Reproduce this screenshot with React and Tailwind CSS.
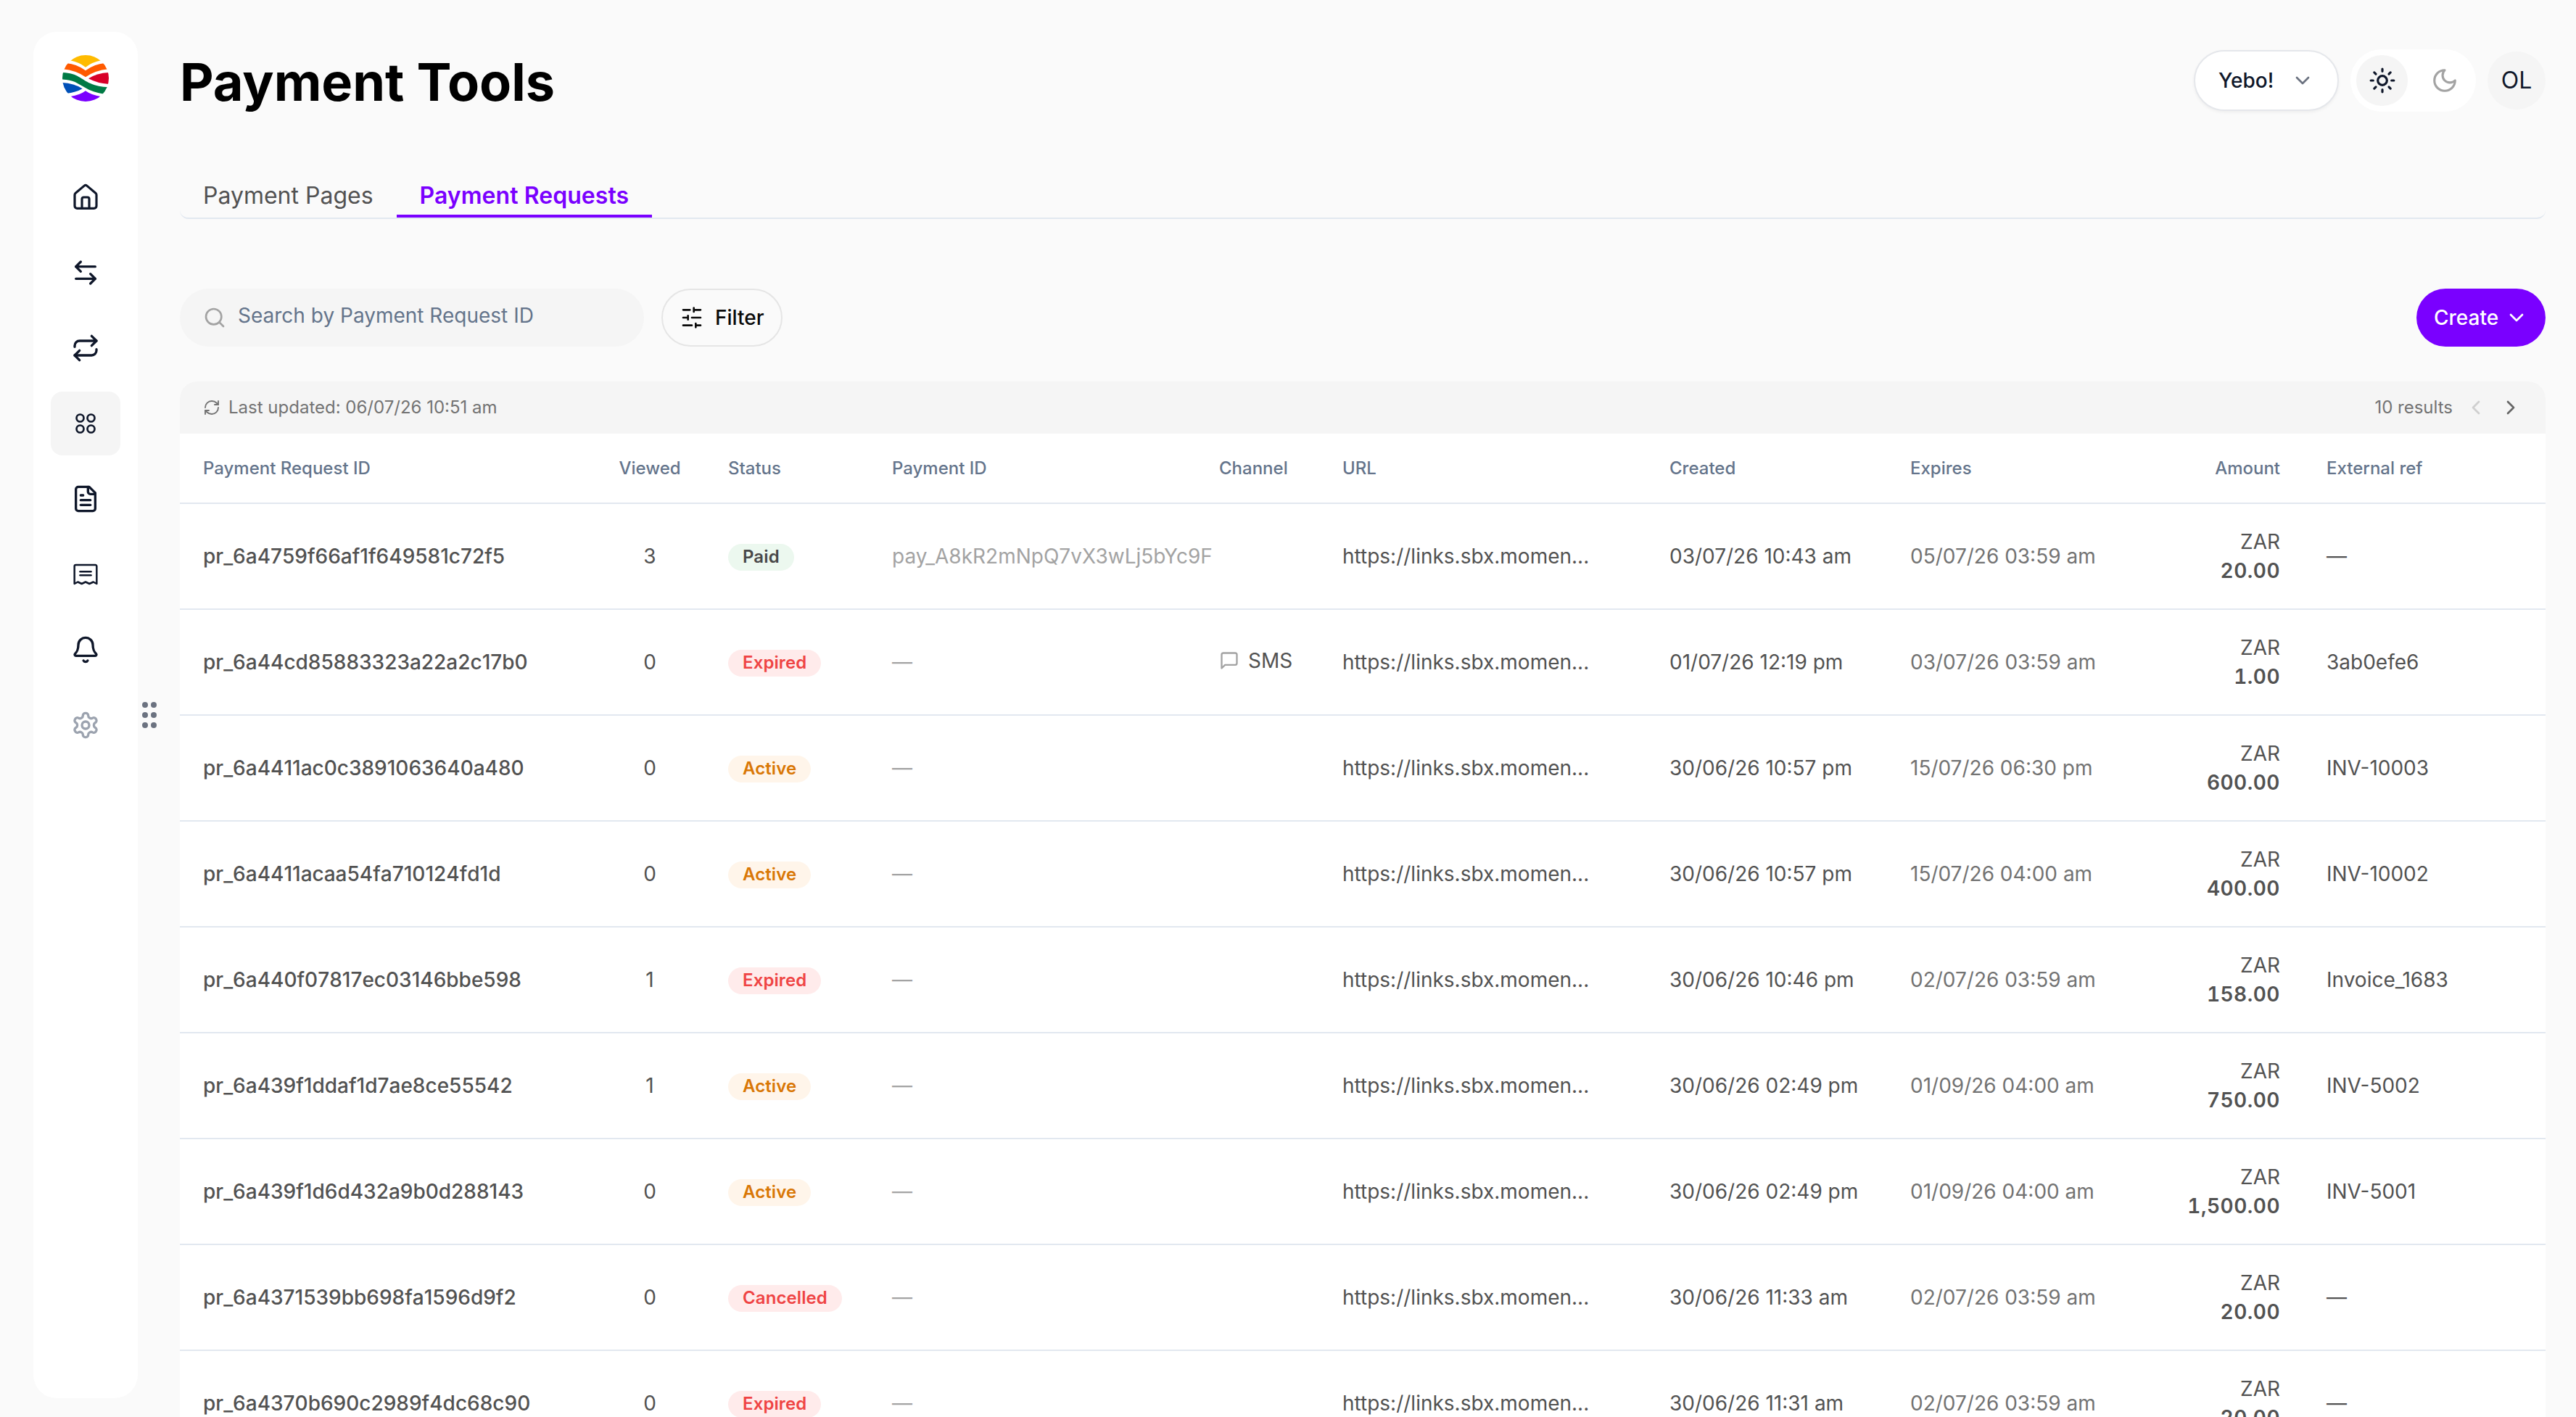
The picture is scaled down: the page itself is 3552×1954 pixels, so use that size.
import React from "react";

function Icon({ children, className = "size-8", strokeWidth = 2 }) {
  return (
    <svg
      viewBox="0 0 24 24"
      fill="none"
      stroke="currentColor"
      strokeWidth={strokeWidth}
      strokeLinecap="round"
      strokeLinejoin="round"
      className={`shrink-0 ${className}`}
    >
      {children}
    </svg>
  );
}

function Logo() {
  return (
    <svg viewBox="24 24 192 192" className="size-16 shrink-0">
      <defs>
        <clipPath id="disc">
          <circle cx="120" cy="120" r="96" />
        </clipPath>
      </defs>
      <g clipPath="url(#disc)">
        <path d="M56 46Q92 53 120 74Q148 53 184 46V20H56Z" fill="#ffbb00" />
        <path d="M40 57Q85 61 120 88Q155 61 200 57L214 82Q160 87 120 115Q80 87 26 82Z" fill="#ff5a00" />
        <path d="M20 96C90 98 100 125 140 141C165 152 185 156 220 157L198 185C165 181 140 172 115 157C85 139 70 126 20 124Z" fill="#007a45" />
        <path d="M132 121Q167 98 220 96V144Q170 142 132 121Z" fill="#d80029" />
        <path d="M20 138Q70 139 107 163Q80 179 40 183Z" fill="#0050b8" />
        <path d="M58 195Q95 190 120 172Q145 190 182 195V220H58Z" fill="#7a00ff" />
      </g>
    </svg>
  );
}

const navItems = [
  {
    name: "Home",
    icon: (
      <Icon className="size-10" strokeWidth={1.9}>
        <path d="M3 10.1a2 2 0 0 1 .72-1.54l7.2-6.1a1.7 1.7 0 0 1 2.16 0l7.2 6.1A2 2 0 0 1 21 10.1v9.1a2 2 0 0 1-2 2H5a2 2 0 0 1-2-2z" />
        <path d="M9 21v-7.6a1.4 1.4 0 0 1 1.4-1.4h3.2a1.4 1.4 0 0 1 1.4 1.4V21" />
      </Icon>
    ),
  },
  {
    name: "Transfers",
    icon: (
      <Icon className="size-10">
        <path d="M8 3 4 7l4 4" />
        <path d="M4 7h16" />
        <path d="m16 21 4-4-4-4" />
        <path d="M20 17H4" />
      </Icon>
    ),
  },
  {
    name: "Subscriptions",
    icon: (
      <Icon className="size-10">
        <path d="m17 2 4 4-4 4" />
        <path d="M3 11v-1a4 4 0 0 1 4-4h14" />
        <path d="m7 22-4-4 4-4" />
        <path d="M21 13v1a4 4 0 0 1-4 4H3" />
      </Icon>
    ),
  },
  {
    name: "Payment Tools",
    active: true,
    icon: (
      <Icon className="size-10" strokeWidth={1.6}>
        <circle cx="7.5" cy="7.5" r="3" />
        <circle cx="16.5" cy="7.5" r="3" />
        <circle cx="7.5" cy="16.5" r="3" />
        <circle cx="16.5" cy="16.5" r="3" />
      </Icon>
    ),
  },
  {
    name: "Reports",
    icon: (
      <Icon className="size-10">
        <path d="M15 2H6a2 2 0 0 0-2 2v16a2 2 0 0 0 2 2h12a2 2 0 0 0 2-2V7Z" />
        <path d="M14 2v4a2 2 0 0 0 2 2h4" />
        <path d="M10 9H8" />
        <path d="M16 13H8" />
        <path d="M16 17H8" />
      </Icon>
    ),
  },
  {
    name: "Receipts",
    icon: (
      <Icon className="size-10" strokeWidth={1.5}>
        <path d="M2.8 19.8V5.3a1.1 1.1 0 0 1 1.1-1.1h16.2a1.1 1.1 0 0 1 1.1 1.1v14.5l-2.8-1.5-3.2 1.5-3.2-1.5-3.2 1.5-3.2-1.5z" />
        <path d="M7.5 9.8h9" />
        <path d="M7.5 12.8h9" />
      </Icon>
    ),
  },
  {
    name: "Notifications",
    icon: (
      <Icon className="size-10">
        <path d="M10.268 21a2 2 0 0 0 3.464 0" />
        <path d="M3.262 15.326A1 1 0 0 0 4 17h16a1 1 0 0 0 .74-1.673C19.41 13.956 18 12.499 18 8A6 6 0 0 0 6 8c0 4.499-1.411 5.956-2.738 7.326" />
      </Icon>
    ),
  },
  {
    name: "Settings",
    muted: true,
    icon: (
      <Icon className="size-10">
        <path d="M12.22 2h-.44a2 2 0 0 0-2 2v.18a2 2 0 0 1-1 1.73l-.43.25a2 2 0 0 1-2 0l-.15-.08a2 2 0 0 0-2.73.73l-.22.38a2 2 0 0 0 .73 2.73l.15.1a2 2 0 0 1 1 1.72v.51a2 2 0 0 1-1 1.74l-.15.09a2 2 0 0 0-.73 2.73l.22.38a2 2 0 0 0 2.73.73l.15-.08a2 2 0 0 1 2 0l.43.25a2 2 0 0 1 1 1.73V20a2 2 0 0 0 2 2h.44a2 2 0 0 0 2-2v-.18a2 2 0 0 1 1-1.73l.43-.25a2 2 0 0 1 2 0l.15.08a2 2 0 0 0 2.73-.73l.22-.39a2 2 0 0 0-.73-2.73l-.15-.08a2 2 0 0 1-1-1.74v-.5a2 2 0 0 1 1-1.74l.15-.09a2 2 0 0 0 .73-2.73l-.22-.38a2 2 0 0 0-2.73-.73l-.15.08a2 2 0 0 1-2 0l-.43-.25a2 2 0 0 1-1-1.73V4a2 2 0 0 0-2-2z" />
        <circle cx="12" cy="12" r="3" />
      </Icon>
    ),
  },
];

const rows = [
  { id: "pr_6a4759f66af1f649581c72f5", viewed: 3, status: "Paid", payment: "pay_A8kR2mNpQ7vX3wLj5bYc9F", created: "03/07/26 10:43 am", expires: "05/07/26 03:59 am", amount: "20.00", ref: "—" },
  { id: "pr_6a44cd85883323a22a2c17b0", viewed: 0, status: "Expired", payment: "—", channel: "SMS", created: "01/07/26 12:19 pm", expires: "03/07/26 03:59 am", amount: "1.00", ref: "3ab0efe6" },
  { id: "pr_6a4411ac0c3891063640a480", viewed: 0, status: "Active", payment: "—", created: "30/06/26 10:57 pm", expires: "15/07/26 06:30 pm", amount: "600.00", ref: "INV-10003" },
  { id: "pr_6a4411acaa54fa710124fd1d", viewed: 0, status: "Active", payment: "—", created: "30/06/26 10:57 pm", expires: "15/07/26 04:00 am", amount: "400.00", ref: "INV-10002" },
  { id: "pr_6a440f07817ec03146bbe598", viewed: 1, status: "Expired", payment: "—", created: "30/06/26 10:46 pm", expires: "02/07/26 03:59 am", amount: "158.00", ref: "Invoice_1683" },
  { id: "pr_6a439f1ddaf1d7ae8ce55542", viewed: 1, status: "Active", payment: "—", created: "30/06/26 02:49 pm", expires: "01/09/26 04:00 am", amount: "750.00", ref: "INV-5002" },
  { id: "pr_6a439f1d6d432a9b0d288143", viewed: 0, status: "Active", payment: "—", created: "30/06/26 02:49 pm", expires: "01/09/26 04:00 am", amount: "1,500.00", ref: "INV-5001" },
  { id: "pr_6a4371539bb698fa1596d9f2", viewed: 0, status: "Cancelled", payment: "—", created: "30/06/26 11:33 am", expires: "02/07/26 03:59 am", amount: "20.00", ref: "—" },
  { id: "pr_6a4370b690c2989f4dc68c90", viewed: 0, status: "Expired", payment: "—", created: "30/06/26 11:31 am", expires: "02/07/26 03:59 am", amount: "20.00", ref: "—" },
];

const statusStyles = {
  Paid: "bg-[#ecf8ef] text-[#484848]",
  Active: "bg-[#fff5ea] text-[#d97706]",
  Expired: "bg-[#ffebeb] text-[#ef4444]",
  Cancelled: "bg-[#ffebeb] text-[#ef4444]",
};

const gridCols =
  "grid grid-cols-[572px_152px_226px_451px_170px_451px_332px_332px_242px_334px] items-center";

function Sidebar() {
  return (
    <aside className="flex h-[1884px] w-36 shrink-0 flex-col items-center rounded-[32px] bg-white pt-8">
      <Logo />
      <nav className="mt-[88px] flex flex-col gap-4">
        {navItems.map((item) => (
          <a
            key={item.name}
            aria-label={item.name}
            className={`flex h-[88px] w-24 items-center justify-center rounded-2xl ${
              item.active ? "bg-[#f5f5f5]" : ""
            } ${item.muted ? "text-[#9ca3af]" : "text-[#0f172a]"}`}
          >
            {item.icon}
          </a>
        ))}
      </nav>
    </aside>
  );
}

function DragHandle() {
  return (
    <div className="mt-[924px] ml-1.5 grid h-9 w-5 shrink-0 grid-cols-2 gap-x-1 gap-y-1.5">
      {[0, 1, 2, 3, 4, 5].map((n) => (
        <span key={n} className="size-2 rounded-full bg-[#6b7280]" />
      ))}
    </div>
  );
}

function Header() {
  return (
    <header className="flex h-[86px] items-center justify-between">
      <h1 className="pt-1 text-[72px] leading-[80px] font-bold text-black">
        Payment Tools
      </h1>
      <div className="flex items-center gap-4">
        <button className="flex h-[84px] w-[200px] items-center justify-between rounded-full border-2 border-[#e5e7eb] bg-white px-8 text-[28px] font-medium text-[#0f172a] shadow-[0_2px_4px_rgba(0,0,0,0.05)]">
          Yebo!
          <Icon className="size-8 text-[#6b7280]">
            <path d="m6 9 6 6 6-6" />
          </Icon>
        </button>
        <div className="flex h-[86px] w-[173px] items-center justify-between rounded-full bg-white px-2">
          <span className="flex h-[70px] w-[71px] items-center justify-center rounded-full bg-[#f5f5f5] text-[#0f172a]">
            <Icon className="size-[38px]">
              <circle cx="12" cy="12" r="4" />
              <path d="M12 2v2M12 20v2M4.93 4.93l1.41 1.41M17.66 17.66l1.41 1.41M2 12h2M20 12h2M6.34 17.66l-1.41 1.41M19.07 4.93l-1.41 1.41" />
            </Icon>
          </span>
          <span className="flex h-[70px] w-[71px] items-center justify-center rounded-full text-[#a3a3a3]">
            <Icon className="size-[38px]">
              <path d="M12 3a6 6 0 0 0 9 9 9 9 0 1 1-9-9Z" />
            </Icon>
          </span>
        </div>
        <span className="flex size-20 items-center justify-center rounded-full bg-[#f5f5f5] text-[32px] text-[#0f172a]">
          OL
        </span>
      </div>
    </header>
  );
}

function Tabs() {
  return (
    <div className="mt-[84px] flex h-16 rounded-xl border-b-2 border-[#e2e8f0] text-[32px] leading-[64px]">
      <a className="h-[62px] px-8 text-[#525252]">Payment Pages</a>
      <a className="h-[62px] border-b-4 border-[#7a00ff] px-8 font-semibold tracking-[0.05px] text-[#7a00ff]">
        Payment Requests
      </a>
    </div>
  );
}

function Toolbar() {
  return (
    <div className="mt-24 flex items-center justify-between">
      <div className="flex gap-6">
        <label className="flex h-20 w-[640px] items-center gap-4 rounded-full bg-[#f5f5f5] pl-8 text-[28px] text-[#64748b]">
          <Icon className="size-8 text-[#a3a3a3]">
            <circle cx="11" cy="11" r="8" />
            <path d="m21 21-4.3-4.3" />
          </Icon>
          <span className="-mt-1.5">Search by Payment Request ID</span>
        </label>
        <button className="flex h-20 w-[167px] items-center gap-4 rounded-full border-2 border-[#e5e5e5] pl-6 text-[28px] font-medium text-[#0a0a0a]">
          <Icon className="size-8">
            <path d="M21 4h-7M10 4H3M21 12h-9M8 12H3M21 20h-5M12 20H3M14 2v4M8 10v4M16 18v4" />
          </Icon>
          Filter
        </button>
      </div>
      <button className="flex h-20 w-[178px] items-center justify-between rounded-full bg-[#7a00ff] px-6 text-[28px] font-medium text-white">
        Create
        <Icon className="size-8">
          <path d="m6 9 6 6 6-6" />
        </Icon>
      </button>
    </div>
  );
}

function TableBar() {
  return (
    <div className="flex h-[72px] items-center justify-between bg-[#f5f5f5] px-8 text-[24px] text-[#737373]">
      <div className="flex items-center gap-[11px]">
        <Icon className="size-6" strokeWidth={1.9}>
          <path d="M3 12a9 9 0 0 1 9-9 9.75 9.75 0 0 1 6.74 2.74L21 8" />
          <path d="M21 3v5h-5" />
          <path d="M21 12a9 9 0 0 1-9 9 9.75 9.75 0 0 1-6.74-2.74L3 16" />
          <path d="M8 16H3v5" />
        </Icon>
        <span>Last updated: 06/07/26 10:51 am</span>
      </div>
      <div className="flex items-center gap-4">
        <span>10 results</span>
        <Icon className="size-8 text-[#cfcfcf]">
          <path d="m15 18-6-6 6-6" />
        </Icon>
        <Icon className="size-8 text-[#666666]">
          <path d="m9 18 6-6-6-6" />
        </Icon>
      </div>
    </div>
  );
}

function TableRow({ row }) {
  return (
    <div className={`${gridCols} h-[146px] border-b-2 border-[#e2e8f0] text-[28px] leading-10 whitespace-nowrap text-[#525252]`}>
      <span className="pl-8 font-medium [font-kerning:none]">{row.id}</span>
      <span className="text-center">{row.viewed}</span>
      <span className="flex pt-[3px] pl-8">
        <span className={`h-[37px] rounded-full px-5 text-[24px] leading-[35px] font-semibold tracking-[0.1px] ${statusStyles[row.status]}`}>
          {row.status}
        </span>
      </span>
      <span className="pl-8 text-[#a3a3a3]">{row.payment}</span>
      <span className="-mt-1 flex items-center gap-3 pl-8">
        {row.channel && (
          <>
            <Icon className="size-7 text-[#a3a3a3]">
              <path d="M21 15a2 2 0 0 1-2 2H7l-4 4V5a2 2 0 0 1 2-2h14a2 2 0 0 1 2 2z" />
            </Icon>
            {row.channel}
          </>
        )}
      </span>
      <span className="pl-8">https://links.sbx.momen...</span>
      <span className="pl-8">{row.created}</span>
      <span className="pl-8 text-[#737373]">{row.expires}</span>
      <span className="flex flex-col pr-8 text-right">
        <span>ZAR</span>
        <span className="font-semibold tracking-[0.5px] tabular-nums">{row.amount}</span>
      </span>
      <span className="pl-8">{row.ref}</span>
    </div>
  );
}

function RequestsTable() {
  return (
    <section className="mt-12 overflow-hidden rounded-t-3xl bg-white">
      <TableBar />
      <div className={`${gridCols} h-[97px] border-b-2 border-[#e2e8f0] text-[24px] font-medium text-[#64748b]`}>
        <span className="pl-8">Payment Request ID</span>
        <span className="text-center">Viewed</span>
        <span className="pl-8">Status</span>
        <span className="pl-8">Payment ID</span>
        <span className="pl-8">Channel</span>
        <span className="pl-8">URL</span>
        <span className="pl-8">Created</span>
        <span className="pl-8">Expires</span>
        <span className="pr-8 text-right">Amount</span>
        <span className="pl-8">External ref</span>
      </div>
      {rows.map((row) => (
        <TableRow key={row.id} row={row} />
      ))}
    </section>
  );
}

export default function App() {
  return (
    <div className="flex h-[1954px] w-[3552px] items-start overflow-hidden bg-[#fafafa] pt-11 pl-[46px] font-['Inter',sans-serif]">
      <Sidebar />
      <DragHandle />
      <main className="mt-6 ml-8 w-[3262px] shrink-0">
        <Header />
        <Tabs />
        <Toolbar />
        <RequestsTable />
      </main>
    </div>
  );
}
